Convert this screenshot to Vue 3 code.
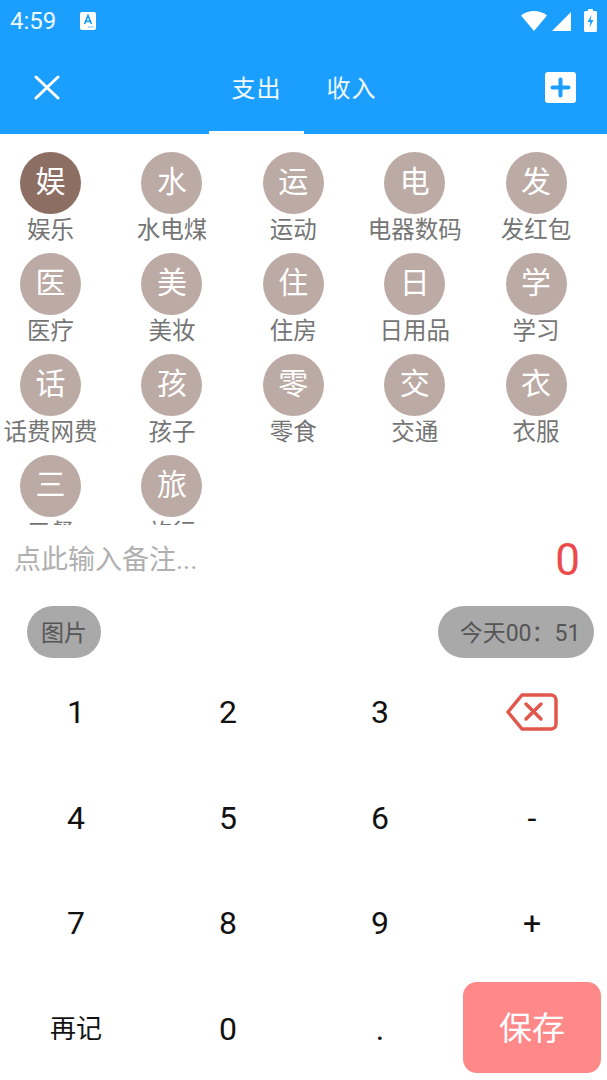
<script setup>
const categories = [
  { icon: '娱', name: '娱乐', active: true },
  { icon: '水', name: '水电煤' },
  { icon: '运', name: '运动' },
  { icon: '电', name: '电器数码' },
  { icon: '发', name: '发红包' },
  { icon: '医', name: '医疗' },
  { icon: '美', name: '美妆' },
  { icon: '住', name: '住房' },
  { icon: '日', name: '日用品' },
  { icon: '学', name: '学习' },
  { icon: '话', name: '话费网费' },
  { icon: '孩', name: '孩子' },
  { icon: '零', name: '零食' },
  { icon: '交', name: '交通' },
  { icon: '衣', name: '衣服' },
  { icon: '三', name: '三餐' },
  { icon: '旅', name: '旅行' },
]

const keys = ['1', '2', '3', 'back', '4', '5', '6', '-', '7', '8', '9', '+', '再记', '0', '.', 'save']
</script>

<template>
  <div class="page">
    <header class="top">
      <div class="status">
        <div class="status-left">
          <span class="time">4:59</span>
          <svg class="a-icon" width="16" height="18" viewBox="0 0 16 18">
            <rect width="16" height="18" rx="2" fill="#fff" />
            <path d="M4.500 12 8 3.500 11.500 12M5.700 9.300h4.600" fill="none" stroke="#1a9fff" stroke-width="1.700" />
            <path d="M8 15h6" stroke="#8ccfff" stroke-width="1.200" />
          </svg>
        </div>
        <div class="status-right">
          <svg class="wifi" width="26" height="20" viewBox="0 0 26 20"><path d="M0 4.500C3.500 1.600 8 0 13 0s9.500 1.600 13 4.500L13 20z" fill="#fff" /></svg>
          <svg class="signal" width="19" height="19" viewBox="0 0 19 19"><path d="M19 0v19H0z" fill="#fff" /></svg>
          <svg class="battery" width="13" height="23" viewBox="0 0 13 23">
            <path d="M4 0h5v2h2.500A1.500 1.500 0 0 1 13 3.500v18a1.500 1.500 0 0 1-1.500 1.500h-10A1.500 1.500 0 0 1 0 21.500v-18A1.500 1.500 0 0 1 1.500 2H4z" fill="#fff" />
            <path d="M7.500 6 3.500 13h2.800L5.500 18.500l4-7.500H6.700z" fill="#1a9fff" />
          </svg>
        </div>
      </div>
      <div class="nav">
        <svg class="close" width="26" height="25" viewBox="0 0 26 25">
          <path d="M2 2l22 21M24 2 2 23" stroke="#fff" stroke-width="3" stroke-linecap="round" />
        </svg>
        <div class="tabs">
          <div class="tab tab-active">支出</div>
          <div class="tab">收入</div>
        </div>
        <svg class="add" width="31" height="31" viewBox="0 0 31 31">
          <rect width="31" height="31" rx="3" fill="#fff" />
          <path d="M15.500 7.500v16M7.500 15.500h16" stroke="#1a9fff" stroke-width="4" stroke-linecap="round" />
        </svg>
      </div>
    </header>

    <div class="cats">
      <div v-for="c in categories" :key="c.name" class="cat">
        <div class="circle" :class="{ 'circle-active': c.active }">{{ c.icon }}</div>
        <div class="cat-name">{{ c.name }}</div>
      </div>
    </div>

    <div class="memo">
      <span class="memo-hint">点此输入备注...</span>
      <span class="amount">0</span>
    </div>

    <div class="chips">
      <div class="chip chip-pic">图片</div>
      <div class="chip chip-date">今天00：51</div>
    </div>

    <div class="keypad">
      <div v-for="k in keys" :key="k" class="key" :class="{ 'key-cn': k === '再记' }">
        <svg v-if="k === 'back'" width="52" height="38" viewBox="0 0 52 38">
          <path d="M16 2h29a5 5 0 0 1 5 5v24a5 5 0 0 1-5 5H16L2 19z" fill="none" stroke="#e2574c" stroke-width="3.500" stroke-linejoin="round" />
          <path d="M20 11l15 15M35 11 20 26" stroke="#e2574c" stroke-width="3.500" stroke-linecap="round" />
        </svg>
        <div v-else-if="k === 'save'" class="save">保存</div>
        <template v-else>{{ k }}</template>
      </div>
    </div>
  </div>
</template>

<style scoped>
.page {
  width: 607px;
  height: 1080px;
  overflow: hidden;
  background: #fff;
  font-family: Roboto, "Noto Sans CJK SC", sans-serif;
}
.top {
  height: 134px;
  background: #1a9fff;
  color: #fff;
  box-sizing: border-box;
}
.status {
  height: 42px;
  display: flex;
  align-items: center;
  justify-content: space-between;
  padding: 0 10px;
}
.status-left {
  display: flex;
  align-items: center;
  gap: 24px;
}
.time {
  font-size: 24px;
  color: #f0f8ff;
}
.status-right {
  display: flex;
  align-items: flex-start;
}
.signal {
  margin: 1px 0 0 5px;
}
.battery {
  margin: -2px 0 0 13px;
}
.a-icon {
  display: block;
}
.nav {
  height: 92px;
  padding: 0 31px 2px 34px;
  box-sizing: border-box;
  display: flex;
  align-items: center;
  justify-content: space-between;
  position: relative;
}
.tabs {
  position: absolute;
  left: 209px;
  top: 0;
  bottom: 0;
  display: flex;
}
.tab {
  width: 95px;
  padding-bottom: 4px;
  display: flex;
  align-items: center;
  justify-content: center;
  font-size: 24px;
  box-sizing: border-box;
  color: #f2f9ff;
  letter-spacing: 1px;
}
.tab-active {
  border-bottom: 3px solid #fff;
  padding-bottom: 1px;
}
.cats {
  height: 391px;
  overflow: hidden;
  display: grid;
  grid-template-columns: repeat(5, 101px);
  column-gap: 20.4px;
  grid-auto-rows: 101px;
  align-content: start;
  padding-top: 18px;
  box-sizing: border-box;
}
.cat {
  display: flex;
  flex-direction: column;
  align-items: center;
}
.circle {
  width: 61px;
  height: 62px;
  padding-bottom: 8px;
  box-sizing: border-box;
  border-radius: 50%;
  background: #bcaaa4;
  color: #fff;
  font-size: 30px;
  display: flex;
  align-items: center;
  justify-content: center;
}
.circle-active {
  background: #8d6e63;
}
.cat-name {
  margin-top: 1px;
  font-size: 23.500px;
  line-height: 30px;
  color: #757575;
  white-space: nowrap;
}
.memo {
  height: 72px;
  display: flex;
  align-items: center;
  justify-content: space-between;
  padding: 0 27px 0 14px;
}
.memo-hint {
  font-size: 27px;
  color: #b0b0b0;
  margin-bottom: 7px;
}
.amount {
  font-size: 44px;
  color: #ec4a4a;
  margin-bottom: 2px;
}
.chips {
  height: 52px;
  margin-top: 9px;
  display: flex;
  justify-content: space-between;
  padding: 0 13px 0 27px;
}
.chip {
  height: 52px;
  border-radius: 26px;
  background: #a9a9a9;
  color: #555;
  font-size: 23px;
  padding-bottom: 3px;
  display: flex;
  align-items: center;
  justify-content: center;
  box-sizing: border-box;
}
.chip-pic {
  width: 74px;
}
.chip-date {
  width: 156px;
  padding-left: 8px;
}
.keypad {
  margin-top: 1px;
  display: grid;
  grid-template-columns: repeat(4, 152px);
  grid-auto-rows: 105.700px;
}
.key {
  display: flex;
  align-items: center;
  justify-content: center;
  font-size: 32px;
  color: #111;
}
.key-cn {
  font-size: 26px;
  padding-bottom: 4px;
}
.save {
  width: 138px;
  height: 91px;
  margin-bottom: 2px;
  padding-bottom: 3px;
  box-sizing: border-box;
  border-radius: 14px;
  background: #ff8888;
  color: #fff;
  font-size: 33px;
  display: flex;
  align-items: center;
  justify-content: center;
}
</style>
